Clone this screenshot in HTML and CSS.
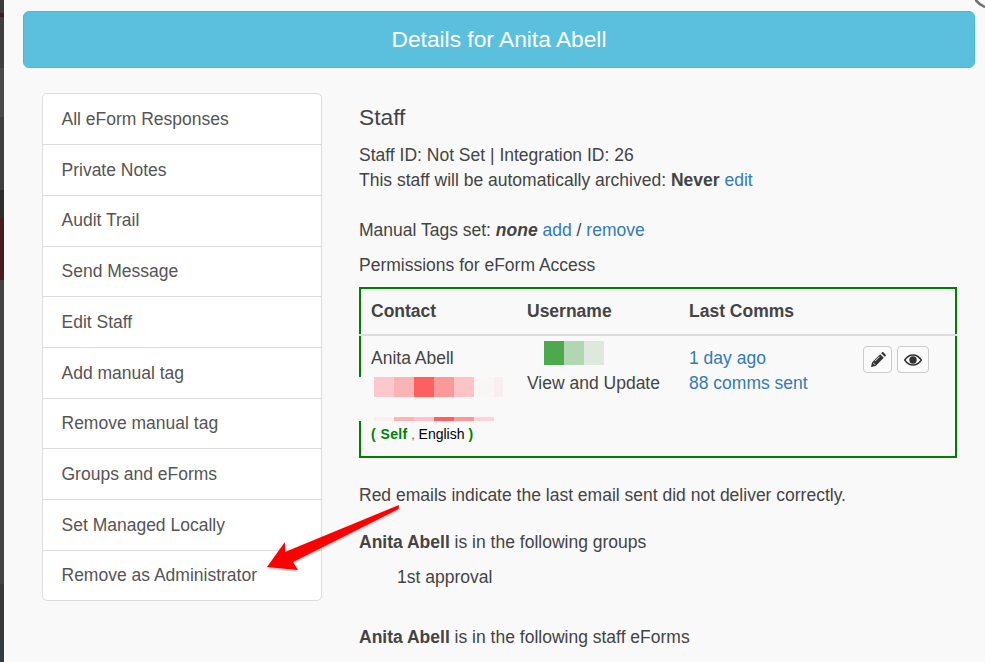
FILE: index.html
```html
<!DOCTYPE html>
<html lang="en">
<head>
<meta charset="utf-8">
<title>Details for Anita Abell</title>
<link rel="stylesheet" href="styles.css">
</head>
<body>
<div class="screen">
  <div class="backdrop"></div>
  <main class="modal">
    <header class="banner">Details for Anita Abell</header>
    <div class="columns">
      <nav class="menu">
        <a class="menu-item">All eForm Responses</a>
        <a class="menu-item">Private Notes</a>
        <a class="menu-item">Audit Trail</a>
        <a class="menu-item">Send Message</a>
        <a class="menu-item">Edit Staff</a>
        <a class="menu-item">Add manual tag</a>
        <a class="menu-item">Remove manual tag</a>
        <a class="menu-item">Groups and eForms</a>
        <a class="menu-item">Set Managed Locally</a>
        <a class="menu-item">Remove as Administrator</a>
      </nav>
      <section class="content">
        <h2 class="title">Staff</h2>
        <p class="ids">Staff ID: Not Set | Integration ID: 26<br>This staff will be automatically archived: <b>Never</b> <a class="link">edit</a></p>
        <p class="tags">Manual Tags set: <b><i>none</i></b> <a class="link">add</a> / <a class="link">remove</a></p>
        <p class="perm-title">Permissions for eForm Access</p>
        <div class="perm">
          <div class="perm-row perm-head">
            <div>Contact</div><div>Username</div><div>Last Comms</div><div></div>
          </div>
          <div class="perm-row perm-body">
            <div class="cell-contact">
              <div>Anita Abell</div>
              <div class="redact">
                <div class="pixels pixels-a"><i class="r1"></i><i class="r2"></i><i class="r3"></i><i class="r4"></i><i class="r5"></i><i class="r6"></i><i class="r7"></i></div>
                <div class="pixels pixels-b"><i class="r8"></i><i class="r2"></i><i class="r5"></i><i class="r3"></i><i class="r4"></i><i class="r9"></i></div>
              </div>
              <div class="meta"><b>( <span class="self">Self</span> </b><span class="comma">,</span> English <b>)</b></div>
            </div>
            <div class="cell-user">
              <div class="pixels pixels-g"><i class="g1"></i><i class="g2"></i><i class="g3"></i></div>
              <div>View and Update</div>
            </div>
            <div><a class="link">1 day ago</a><br><a class="link">88 comms sent</a></div>
            <div class="actions">
              <button class="btn btn-edit" aria-label="Edit">
                <svg viewBox="0 0 16 16" width="16" height="16"><path d="M1 15l1-4.6 8.2-8.2 3.6 3.6L5.6 14z M11.2 1.2l.9-.9c.4-.3.9-.3 1.2 0l2.4 2.4c.3.4.3.9 0 1.2l-.9.9z M3 11l2 2" fill="#333"/><path d="M3.1 10.9l2 2M5 9.2l4.6-4.6" stroke="#fff" stroke-width=".9" fill="none"/></svg>
              </button>
              <button class="btn btn-view" aria-label="View">
                <svg viewBox="0 0 18 12" width="18" height="12"><path d="M.7 6C3 2.6 5.800 1 9 1s6 1.600 8.300 5C15 9.400 12.200 11 9 11S3 9.400.7 6z" fill="none" stroke="#333" stroke-width="1.500"/><circle cx="9" cy="6" r="3.700" fill="#333"/></svg>
              </button>
            </div>
          </div>
        </div>
        <p class="note">Red emails indicate the last email sent did not deliver correctly.</p>
        <p class="group-head"><b>Anita Abell</b> is in the following groups</p>
        <p class="group-item">1st approval</p>
        <p class="forms-head"><b>Anita Abell</b> is in the following staff eForms</p>
      </section>
    </div>
  </main>
  <svg class="close-mark" viewBox="0 0 10 8" width="10" height="8"><path d="M0-1C2 2 5 5 10 7" fill="none" stroke="#6e6e6e" stroke-width="2.500"/></svg>
  <svg class="arrow" viewBox="0 0 985 662" width="985" height="662">
    <defs><filter id="soft" x="-10%" y="-20%" width="120%" height="140%"><feDropShadow dx="0" dy="1" stdDeviation="1.200" flood-color="#000" flood-opacity=".35"/></filter></defs>
    <polygon points="399,505 398.500,509 293,562 298,570 267,567 285,542 285,552" fill="#fe0000" filter="url(#soft)"/>
  </svg>
</div>
</body>
</html>
```

FILE: styles.css
```css
* { box-sizing: border-box; }
html, body { margin: 0; padding: 0; }
body {
  font-family: "Liberation Sans", Arial, sans-serif;
  font-size: 17.5px;
  line-height: 25px;
  color: #444;
  background: #f9f9f9;
}
.screen {
  position: relative;
  display: flex;
  width: 985px;
  height: 662px;
  overflow: hidden;
}
.backdrop {
  flex: 0 0 4px;
  background: linear-gradient(to bottom,
    #3d3a3c 0 13px, #3d1a33 13px 17px, #3f3d3e 17px 68px, #4b4a4a 68px 117px,
    #3f3f3f 117px 190px, #2e2d2d 190px 218px, #4a1a1e 218px 280px,
    #434242 280px 584px, #383838 584px 640px, #2f3c42 640px 662px);
}
.modal {
  flex: 1;
  padding: 11px 10px 0 19px;
  background: #f9f9f9;
}
.banner {
  height: 57px;
  border: 1px solid #46b8da;
  border-radius: 6px;
  background: #5bc0de;
  color: #fff;
  font-size: 22.75px;
  line-height: 55px;
  text-align: center;
}
.columns {
  display: flex;
  gap: 37px;
  margin: 25px 0 0 19px;
}
.menu {
  flex: 0 0 280px;
  align-self: flex-start;
  display: flex;
  flex-direction: column;
  border: 1px solid #ddd;
  border-radius: 5px;
  background: #fff;
  color: #555;
}
.menu-item {
  height: 50.7px;
  padding: 12.500px 18.500px 0;
  border-top: 1px solid #ddd;
}
.menu-item:first-child { border-top: 0; height: 50.300px; }
.content { flex: 0 0 598px; }
.title {
  margin: 9.500px 0 0;
  font-size: 22.75px;
  line-height: 28px;
  font-weight: 400;
}
.ids { margin: 12.500px 0 0; }
.tags { margin: 25px 0 0; }
.perm-title { margin: 10px 0 0; }
.link { color: #337ab7; }
.perm {
  margin-top: 9px;
  height: 171px;
  border: 2px solid #008000;
}
.perm-row {
  display: grid;
  grid-template-columns: 156px 162px 174px 102px;
  margin: 0 -2px;
  padding: 0 2px;
}
.perm-row > div { padding-left: 10px; }
.perm-head {
  height: 47px;
  padding-top: 10px;
  border-bottom: 2px solid #ddd;
  font-weight: 700;
}
.perm-body { padding-top: 10px; }
.redact {
  display: flex;
  flex-direction: column;
  justify-content: space-between;
  height: 44px;
  margin: 6px 0 0 -14px;
  padding-left: 17px;
  background: #f9f9f9;
  position: relative;
}
.pixels { display: flex; }
.pixels i { display: block; width: 20px; }
.pixels-a { height: 20px; }
.pixels-b { height: 4px; }
.pixels-a .r7 { width: 9px; }
.r1 { background: #fbc9cb; }
.r2 { background: #fbb4b4; }
.r3 { background: #fe5f5f; }
.r4 { background: #fb9999; }
.r5 { background: #fcc4c4; }
.r6 { background: #f9f7f6; }
.r7 { background: #faeeee; }
.r8 { background: #faf0f0; }
.r9 { background: #fcd4d4; }
.meta {
  margin-top: 1px;
  font-size: 14px;
  line-height: 24px;
  color: #000;
}
.meta b { color: #008000; }
.self { margin-left: 1px; letter-spacing: .3px; }
.comma { color: #555; font-size: 12px; }
.cell-user .pixels-g { height: 24px; margin: -5px 0 6px 17px; }
.g1 { background: #4ea84e; }
.g2 { background: #b2d6b2; }
.g3 { background: #dde9dd; }
.actions { display: flex; align-items: flex-start; gap: 5px; }
.btn {
  display: flex;
  align-items: center;
  justify-content: center;
  height: 27px;
  padding: 0;
  border: 1px solid #ccc;
  border-radius: 4px;
  background: #fbfbfb;
}
.btn-edit { width: 29px; }
.btn-view { width: 32px; }
.note { margin: 25px 0 0; }
.group-head { margin: 22px 0 0; }
.group-item { margin: 10px 0 0 38px; }
.forms-head { margin: 35px 0 0; }
.close-mark { position: absolute; top: 0; right: 0; }
.arrow { position: absolute; top: 0; left: 0; pointer-events: none; }
```
